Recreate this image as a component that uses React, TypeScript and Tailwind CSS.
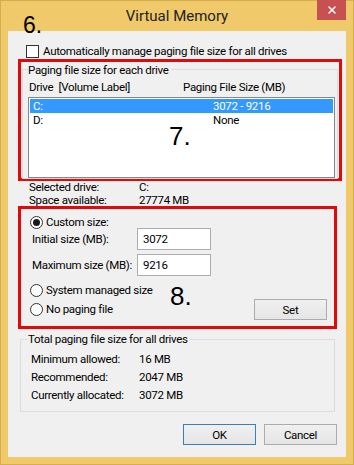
import { X } from 'lucide-react';

const ui = { fontFamily: 'Roboto, Lato, sans-serif' };
const big = { fontFamily: '"Liberation Sans", Arial, sans-serif' };

function Radio({ checked = false }: { checked?: boolean }) {
  return (
    <span className="flex h-[13px] w-[13px] shrink-0 items-center justify-center rounded-full border border-[#333] bg-white">
      {checked && <span className="h-[7px] w-[7px] rounded-full bg-[#1a1a1a]" />}
    </span>
  );
}

function Button({ label, primary = false, className = '' }: { label: string; primary?: boolean; className?: string }) {
  return (
    <div
      className={`flex h-[21px] items-center justify-center border bg-gradient-to-b from-[#f0f0f0] to-[#e5e5e5] text-black ${
        primary ? 'border-[#3c7fb1]' : 'border-[#acacac]'
      } ${className}`}
    >
      {label}
    </div>
  );
}

export default function App() {
  return (
    <div
      className="relative h-[465px] w-[354px] whitespace-nowrap border border-[#d7ae4c] bg-[#efc96a] text-[11.5px] leading-[14px] tracking-[-0.3px] text-black"
      style={ui}
    >
      {/* title bar */}
      <div className="relative flex h-[30px] items-center justify-center">
        <span className="text-[15px] tracking-normal text-[#222]">Virtual Memory</span>
        <div className="absolute right-[7px] top-[-1px] flex h-[20px] w-[29px] items-center justify-center bg-[#c75050]">
          <X className="h-[12px] w-[12px] text-white" strokeWidth={3} />
        </div>
        <span className="absolute left-[22px] top-[13px] text-[23px] leading-[23px] tracking-normal" style={big}>
          6.
        </span>
      </div>

      {/* client area */}
      <div className="mx-[7px] flex h-[426px] flex-col bg-[#f0f0f0] px-[10px] pt-[13px]">
        <div className="flex h-[14px] items-center gap-[4px] pl-[8px]">
          <span className="h-[13px] w-[13px] border border-[#333] bg-white" />
          <span>Automatically manage paging file size for all drives</span>
        </div>

        {/* box 7 */}
        <div className="relative mt-[1px] h-[122px] w-[324px] border-[3px] border-[#e10a0a]">
          <div className="absolute inset-x-[1px] top-[7px] bottom-[-1px] border border-[#dcdcdc]" />
          <div className="relative pl-[7px] pt-[1px]">
            <div className="w-fit bg-[#f0f0f0] pr-[2px]">Paging file size for each drive</div>
            <div className="mt-[3px] flex pl-[1px]">
              <span className="w-[154px]">Drive&nbsp;&nbsp;[Volume Label]</span>
              <span>Paging File Size (MB)</span>
            </div>
            <div className="mt-[3px] h-[81px] w-[307px] border border-[#828790] bg-white p-[1px]">
              <div className="flex h-[14px] items-center bg-[#3399ff] pl-[3px] text-white">
                <span className="w-[180px]">C:</span>
                <span>3072 - 9216</span>
              </div>
              <div className="flex h-[14px] items-center pl-[3px]">
                <span className="w-[180px]">D:</span>
                <span>None</span>
              </div>
            </div>
          </div>
          <span className="absolute left-[148px] top-[61px] text-[26px] leading-[26px] tracking-normal" style={big}>
            7.
          </span>
        </div>

        <div className="grid grid-cols-[110px_1fr] grid-rows-[13px_13px] pl-[11px] leading-[13px]">
          <span>Selected drive:</span>
          <span>C:</span>
          <span>Space available:</span>
          <span>27774 MB</span>
        </div>

        {/* box 8 */}
        <div className="relative mt-[-1px] h-[123px] w-[319px] border-[3px] border-[#e10a0a] pl-[9px] pt-[6px]">
          <div className="flex h-[14px] items-center gap-[3px]">
            <Radio checked />
            <span>Custom size:</span>
          </div>
          <div className="mt-[-1px] flex items-center">
            <span className="w-[107px] pl-[2px]">Initial size (MB):</span>
            <div className="flex h-[22px] w-[74px] items-center border border-[#abadb3] bg-white pl-[5px]">3072</div>
          </div>
          <div className="mt-[4px] flex items-center">
            <span className="w-[107px] pl-[2px]">Maximum size (MB):</span>
            <div className="flex h-[22px] w-[74px] items-center border border-[#abadb3] bg-white pl-[5px]">9216</div>
          </div>
          <div className="mt-[7px] flex h-[14px] items-center gap-[3px]">
            <Radio />
            <span>System managed size</span>
          </div>
          <div className="mt-[5px] flex h-[14px] items-center gap-[3px]">
            <Radio />
            <span>No paging file</span>
          </div>
          <span className="absolute left-[149px] top-[74px] text-[26px] leading-[26px] tracking-normal" style={big}>
            8.
          </span>
          <Button label="Set" className="absolute left-[233px] top-[90px] w-[73px]" />
        </div>

        {/* total */}
        <div className="relative mt-[3px] ml-[2px] h-[80px] w-[315px]">
          <div className="absolute inset-x-0 top-[7px] bottom-0 border border-[#dcdcdc]" />
          <div className="relative pl-[8px]">
            <div className="w-fit bg-[#f0f0f0] pr-[2px]">Total paging file size for all drives</div>
            <div className="mt-[6px] grid grid-cols-[108px_1fr] gap-y-[4px] pl-[3px]">
              <span>Minimum allowed:</span>
              <span>16 MB</span>
              <span>Recommended:</span>
              <span>2047 MB</span>
              <span>Currently allocated:</span>
              <span>3072 MB</span>
            </div>
          </div>
        </div>

        <div className="mt-[12px] mr-[-1px] flex justify-end gap-[8px]">
          <Button label="OK" primary className="w-[73px]" />
          <Button label="Cancel" className="w-[73px]" />
        </div>
      </div>
    </div>
  );
}
